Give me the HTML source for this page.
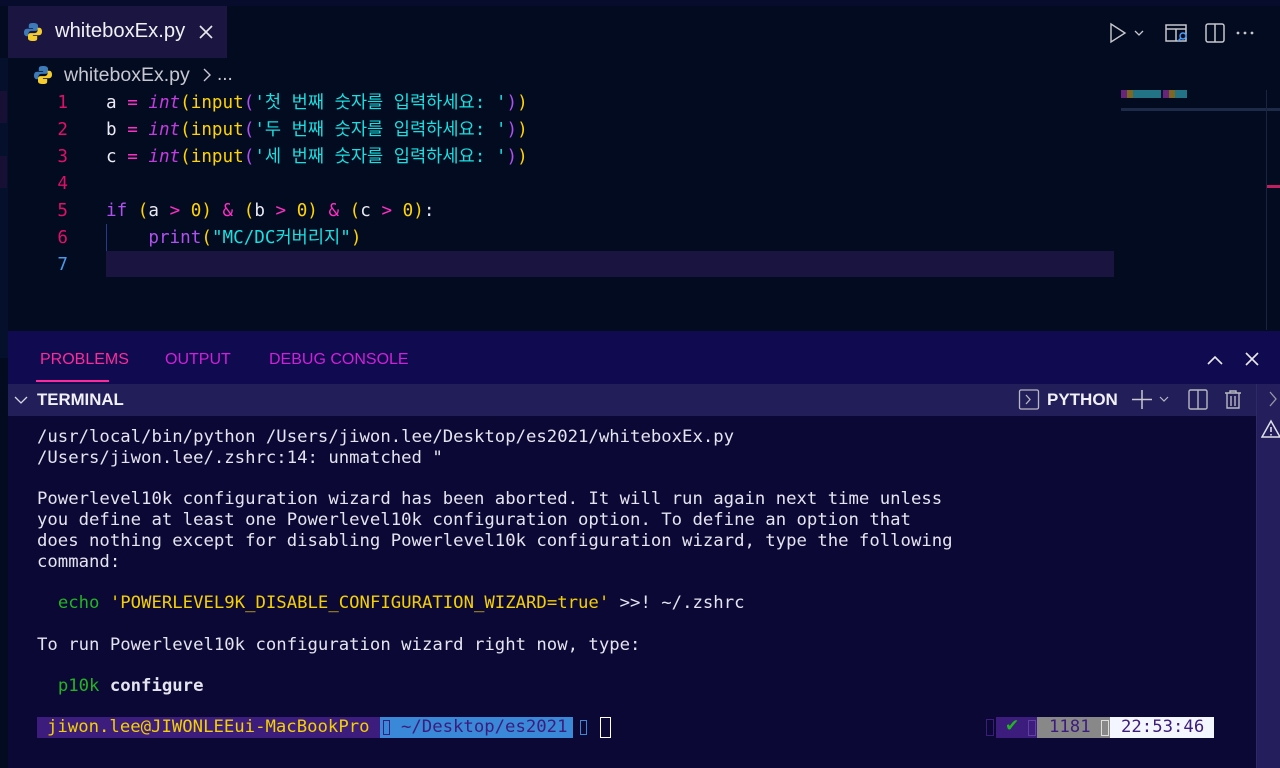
<!DOCTYPE html>
<html><head><meta charset="utf-8"><style>
*{margin:0;padding:0;box-sizing:border-box}
body{width:1280px;height:768px;overflow:hidden;background:#030b21;font-family:"Liberation Sans","Noto Sans CJK KR",sans-serif;position:relative}
.abs{position:absolute}
.mono{font-family:"DejaVu Sans Mono","Liberation Mono","Noto Sans CJK KR",monospace}
.code{position:absolute;left:106px;font-size:17.6px;line-height:22px;height:22px;white-space:pre;color:#e8e8f0}
.ln{position:absolute;left:40px;width:28px;text-align:right;font-size:17.6px;line-height:22px;color:#e0106a}
.w{color:#ececf4}.p{color:#ff2ec4}.i{color:#c43ce0;font-style:italic}.y{color:#ffd400}.c{color:#18e0e0}.pu{color:#b050f0}
.term{position:absolute;left:37px;top:427px;font-size:17.3px;line-height:20.75px;color:#e4e4ee;white-space:pre}
.g{color:#21b521}.yy{color:#f4d000}
</style></head><body>
<div class="abs" style="left:0;top:0;width:1280px;height:6px;background:#070b2c"></div>
<div class="abs" style="left:0;top:58px;width:8px;height:300px;background:#04102c"></div>
<div class="abs" style="left:0;top:91px;width:7px;height:32px;background:#180f35"></div>
<div class="abs" style="left:0;top:156px;width:7px;height:32px;background:#180f35"></div>
<!-- tab -->
<div class="abs" style="left:8px;top:6px;width:219px;height:52px;background:#1b1641"></div>
<svg class="abs" style="left:23px;top:22px" width="20" height="20" viewBox="0 0 20 20"><path d="M9.8 1c-4 0-4 1.7-4 2.8V6h4.3v.8H4C2 6.8 1 8.3 1 10.5s1 3.7 2.8 3.7h1.6v-2.3c0-1.6 1.3-3 3-3h4.2c1.3 0 2.4-1.1 2.4-2.4V3.8C15 2 13.4 1 9.8 1z" fill="#3d7bb8"/><path d="M10.2 19c4 0 4-1.7 4-2.8V14H9.9v-.8H16c2 0 3-1.5 3-3.7s-1-3.7-2.8-3.7h-1.6v2.3c0 1.6-1.3 3-3 3H7.4C6.1 11.1 5 12.2 5 13.5v2.7C5 18 6.6 19 10.2 19z" fill="#f5cc2e"/></svg>
<div class="abs" style="left:55px;top:20px;font-size:20.2px;color:#f0f0f5">whiteboxEx.py</div>
<svg class="abs" style="left:199px;top:25px" width="14" height="14"><path d="M1 1l12 12M13 1L1 13" stroke="#e8e8ee" stroke-width="1.6"/></svg>
<!-- top right icons -->
<svg class="abs" style="left:1108px;top:22px" width="150" height="22" viewBox="0 0 150 22"><path d="M3 2l14 9-14 9z" fill="none" stroke="#c8c8cc" stroke-width="1.4"/><path d="M27 9l4 4 4-4" fill="none" stroke="#c8c8cc" stroke-width="1.3"/><rect x="58" y="3" width="20" height="16" fill="none" stroke="#c8c8cc" stroke-width="1.5"/><path d="M58 7h20M68 7v12" stroke="#c8c8cc" stroke-width="1.5"/><circle cx="75" cy="14" r="3" fill="#030b21" stroke="#4aa0ff" stroke-width="1.4"/><path d="M73 16l-3 3" stroke="#4aa0ff" stroke-width="1.5"/><rect x="98" y="2" width="18" height="18" rx="2" fill="none" stroke="#c8c8cc" stroke-width="1.5"/><path d="M107 2v18" stroke="#c8c8cc" stroke-width="1.5"/><circle cx="137" cy="11" r="1.4" fill="#c8c8cc"/><circle cx="144" cy="11" r="1.4" fill="#c8c8cc"/><circle cx="130" cy="11" r="1.4" fill="#c8c8cc"/></svg>
<!-- breadcrumb -->
<svg class="abs" style="left:33px;top:65px" width="20" height="20" viewBox="0 0 20 20"><path d="M9.8 1c-4 0-4 1.7-4 2.8V6h4.3v.8H4C2 6.8 1 8.3 1 10.5s1 3.7 2.8 3.7h1.6v-2.3c0-1.6 1.3-3 3-3h4.2c1.3 0 2.4-1.1 2.4-2.4V3.8C15 2 13.4 1 9.8 1z" fill="#3d7bb8"/><path d="M10.2 19c4 0 4-1.7 4-2.8V14H9.9v-.8H16c2 0 3-1.5 3-3.7s-1-3.7-2.8-3.7h-1.6v2.3c0 1.6-1.3 3-3 3H7.4C6.1 11.1 5 12.2 5 13.5v2.7C5 18 6.6 19 10.2 19z" fill="#f5cc2e"/></svg>
<div class="abs" style="left:64px;top:64px;font-size:19.5px;color:#c8c8d0">whiteboxEx.py</div>
<svg class="abs" style="left:202px;top:68px" width="10" height="14"><path d="M2 1l6 6-6 6" fill="none" stroke="#c8c8d0" stroke-width="1.4"/></svg>
<div class="abs" style="left:217px;top:64px;font-size:19px;color:#c8c8d0">...</div>
<!-- minimap -->
<div class="abs" style="left:1121px;top:90px;width:66px;height:8px;background:repeating-linear-gradient(90deg,#9030a0 0 6px,#b09020 6px 12px,#30a0b0 12px 40px,#101830 40px 42px);opacity:.7"></div>
<div class="abs" style="left:1121px;top:108px;width:186px;height:3px;background:#1d2a48"></div>
<div class="abs" style="left:1266px;top:90px;width:14px;height:240px;border-left:1px solid #1a2440"></div>
<div class="abs" style="left:1267px;top:185px;width:13px;height:3px;background:#c02060"></div>
<!-- current line -->
<div class="abs" style="left:106px;top:251px;width:1008px;height:26px;background:#1a1440"></div>
<div class="abs" style="left:106px;top:224px;width:1px;height:27px;background:#2a3a8a"></div>
<div class="mono">
<div class="ln" style="top:92px">1</div><div class="ln" style="top:119px">2</div><div class="ln" style="top:146px">3</div><div class="ln" style="top:173px">4</div><div class="ln" style="top:200px">5</div><div class="ln" style="top:227px">6</div><div class="ln" style="top:254px;color:#4a9ae8">7</div>
<div class="code" style="top:92px"><span class="w">a</span> <span class="p">=</span> <span class="i">int</span><span class="y">(input</span><span class="pu">(</span><span class="c">'첫 번째 숫자를 입력하세요: '</span><span class="pu">)</span><span class="y">)</span></div>
<div class="code" style="top:119px"><span class="w">b</span> <span class="p">=</span> <span class="i">int</span><span class="y">(input</span><span class="pu">(</span><span class="c">'두 번째 숫자를 입력하세요: '</span><span class="pu">)</span><span class="y">)</span></div>
<div class="code" style="top:146px"><span class="w">c</span> <span class="p">=</span> <span class="i">int</span><span class="y">(input</span><span class="pu">(</span><span class="c">'세 번째 숫자를 입력하세요: '</span><span class="pu">)</span><span class="y">)</span></div>
<div class="code" style="top:200px"><span class="pu">if</span> <span class="y">(</span>a <span class="p">&gt;</span> <span class="y">0)</span> <span class="p">&amp;</span> <span class="y">(</span>b <span class="p">&gt;</span> <span class="y">0)</span> <span class="p">&amp;</span> <span class="y">(</span>c <span class="p">&gt;</span> <span class="y">0)</span>:</div>
<div class="code" style="top:227px">    <span class="pu">print</span><span class="y">(</span><span class="c">"MC/DC커버리지"</span><span class="y">)</span></div>
</div>
<!-- panel -->
<div class="abs" style="left:8px;top:331px;width:1272px;height:53px;background:#100a50"></div>
<div class="abs" style="left:40px;top:351px;font-size:16px;color:#ff2a9a">PROBLEMS</div>
<div class="abs" style="left:36px;top:380px;width:73px;height:2px;background:#ff2a9a"></div>
<div class="abs" style="left:165px;top:351px;font-size:16px;color:#d020d8">OUTPUT</div>
<div class="abs" style="left:269px;top:351px;font-size:16px;color:#d020d8">DEBUG CONSOLE</div>
<svg class="abs" style="left:1205px;top:350px" width="60" height="20"><path d="M3 14l7-7 7 7" fill="none" stroke="#e8e8ee" stroke-width="1.6"/><path d="M41 3l12 12M53 3L41 15" stroke="#e8e8ee" stroke-width="1.6"/></svg>
<div class="abs" style="left:8px;top:384px;width:1248px;height:32px;background:#221e5a"></div>
<div class="abs" style="left:8px;top:416px;width:1248px;height:352px;background:#0c0836"></div>
<div class="abs" style="left:1256px;top:384px;width:24px;height:384px;background:#241f5c;border-left:1px solid #2e2a68"></div>
<svg class="abs" style="left:12px;top:393px" width="20" height="14"><path d="M3 4l6 6 6-6" fill="none" stroke="#d8d8e0" stroke-width="1.3"/></svg>
<div class="abs" style="left:37px;top:390px;font-size:16.8px;font-weight:bold;color:#f0f0f5">TERMINAL</div>
<svg class="abs" style="left:1018px;top:388px" width="262" height="24"><rect x="1.5" y="2" width="19" height="19" rx="1.5" fill="none" stroke="#b8b8c0" stroke-width="1.3"/><path d="M8 7l4 4.5-4 4.5" fill="none" stroke="#b8b8c0" stroke-width="1.3"/><path d="M114 11.5h20M124 2v19" stroke="#c8c8d0" stroke-width="1.5"/><path d="M142 9l4 4 4-4" fill="none" stroke="#b8b8c0" stroke-width="1.2"/><rect x="171" y="2" width="18" height="19" rx="1.5" fill="none" stroke="#b8b8c0" stroke-width="1.4"/><path d="M180 2v19" stroke="#b8b8c0" stroke-width="1.4"/><path d="M207 5h16M212 5V3h6v2M209 5v15h12V5M213 8v10M217 8v10" fill="none" stroke="#b8b8c0" stroke-width="1.4"/><path d="M252 4l6 7-6 7" fill="none" stroke="#9898a8" stroke-width="1.3"/></svg>
<div class="abs" style="left:1047px;top:390px;font-size:17px;font-weight:bold;color:#f0f0f5">PYTHON</div>
<svg class="abs" style="left:1261px;top:419px" width="20" height="20"><path d="M10 2L1 18h18z" fill="none" stroke="#e0e0e8" stroke-width="1.5"/><path d="M10 8v5M10 15v1.5" stroke="#e0e0e8" stroke-width="1.6"/></svg>
<div class="term mono">/usr/local/bin/python /Users/jiwon.lee/Desktop/es2021/whiteboxEx.py
/Users/jiwon.lee/.zshrc:14: unmatched "

Powerlevel10k configuration wizard has been aborted. It will run again next time unless
you define at least one Powerlevel10k configuration option. To define an option that
does nothing except for disabling Powerlevel10k configuration wizard, type the following
command:

  <span class="g">echo</span> <span class="yy">'POWERLEVEL9K_DISABLE_CONFIGURATION_WIZARD=true'</span> &gt;&gt;! ~/.zshrc

To run Powerlevel10k configuration wizard right now, type:

  <span class="g">p10k</span> <b>configure</b>
</div>
<!-- prompt -->
<div class="abs" style="left:37px;top:717px;width:343px;height:21px;background:#3c1c7c"></div>
<div class="abs mono" style="left:47px;top:717px;font-size:17.3px;line-height:21px;color:#f4d000;white-space:pre">jiwon.lee@JIWONLEEui-MacBookPro</div>
<div class="abs" style="left:380px;top:717px;width:193px;height:21px;background:#3a88d8"></div>
<div class="abs" style="left:383px;top:720px;width:7px;height:15px;border:1.5px solid #3c1c7c"></div>
<div class="abs mono" style="left:401px;top:717px;font-size:17.3px;line-height:21px;color:#3c1c7c;white-space:pre">~/Desktop/es2021</div>
<div class="abs" style="left:580px;top:720px;width:7px;height:15px;border:1.5px solid #3a88d8"></div>
<div class="abs" style="left:600px;top:717px;width:11px;height:21px;border:1.5px solid #fff"></div>
<div class="abs" style="left:986px;top:719px;width:8px;height:17px;border:1.5px solid #3c1c7c"></div>
<div class="abs" style="left:996px;top:717px;width:41px;height:21px;background:#3c1c7c"></div>
<div class="abs" style="left:1005px;top:716px;font-size:17px;color:#21b521;font-family:'DejaVu Sans',sans-serif">✔</div>
<div class="abs" style="left:1028px;top:720px;width:8px;height:16px;border:1.5px solid #6040a0"></div>
<div class="abs" style="left:1037px;top:717px;width:77px;height:21px;background:#888"></div>
<div class="abs mono" style="left:1049px;top:717px;font-size:17.3px;line-height:21px;color:#3c1c7c">1181</div>
<div class="abs" style="left:1101px;top:720px;width:8px;height:16px;border:1.5px solid #ddd"></div>
<div class="abs" style="left:1110px;top:717px;width:104px;height:21px;background:#f4f6ff"></div>
<div class="abs mono" style="left:1121px;top:717px;font-size:17.3px;line-height:21px;color:#3c1c7c">22:53:46</div>
</body></html>
